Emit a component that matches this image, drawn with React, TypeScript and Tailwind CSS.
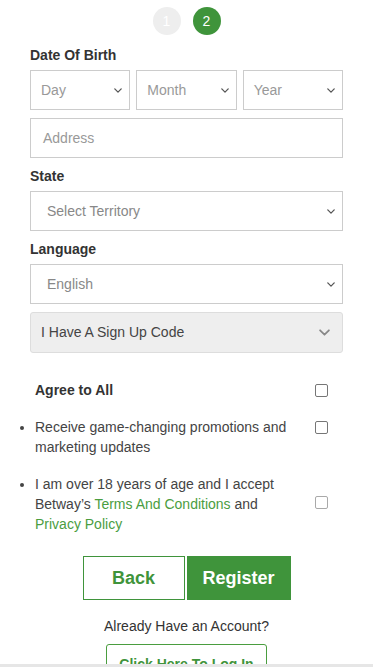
import type { ReactNode } from "react";

function Chevron({ className }: { className?: string }) {
  return (
    <svg
      viewBox="0 0 10 6"
      className={className}
      fill="none"
      stroke="currentColor"
      strokeWidth="1.6"
      strokeLinecap="round"
      strokeLinejoin="round"
    >
      <polyline points="1,1 5,5 9,1" />
    </svg>
  );
}

function SelectBox({ label, padLeft }: { label: string; padLeft: "sm" | "lg" }) {
  return (
    <div className="relative h-10 border border-[#cccccc] bg-white flex items-center">
      <span
        className={
          padLeft === "sm"
            ? "pl-[10px] text-[14px] text-[#999999]"
            : "pl-[16px] text-[14px] text-[#888888]"
        }
      >
        {label}
      </span>
      <Chevron className="absolute right-[7px] top-[17px] w-[8px] h-[5px] text-[#555555]" />
    </div>
  );
}

function Label({ children }: { children: ReactNode }) {
  return (
    <div className="text-[14px] leading-5 font-bold text-[#333333] mb-[5px]">
      {children}
    </div>
  );
}

function Checkbox({ light }: { light?: boolean }) {
  return (
    <span
      className={
        light
          ? "block w-[13px] h-[13px] rounded-[2px] border border-[#a9a9a9] bg-white"
          : "block w-[13px] h-[13px] rounded-[2px] border border-[#767676] bg-white"
      }
    />
  );
}

export default function App() {
  return (
    <div className="min-h-screen bg-white font-['Liberation_Sans',Arial,sans-serif] text-[#333333]">
      <div className="flex justify-center gap-3 pt-[7px]">
        <div className="w-7 h-7 rounded-full bg-[#eeeeee] text-white text-[14px] flex items-center justify-center">
          1
        </div>
        <div className="w-7 h-7 rounded-full bg-[#3f943b] text-white text-[14px] flex items-center justify-center">
          2
        </div>
      </div>

      <div className="px-[30px] pt-[10px]">
        <Label>Date Of Birth</Label>
        <div className="grid grid-cols-3 gap-[6px]">
          <SelectBox label="Day" padLeft="sm" />
          <SelectBox label="Month" padLeft="sm" />
          <SelectBox label="Year" padLeft="sm" />
        </div>

        <div className="mt-2 h-10 border border-[#cccccc] flex items-center pl-[12px] text-[14px] text-[#999999]">
          Address
        </div>

        <div className="mt-2">
          <Label>State</Label>
          <SelectBox label="Select Territory" padLeft="lg" />
        </div>

        <div className="mt-2">
          <Label>Language</Label>
          <SelectBox label="English" padLeft="lg" />
        </div>

        <div className="mt-2 h-[41px] rounded-[3px] border border-[#dddddd] bg-[#eeeeee] flex items-center justify-between pl-[10px] pr-[12px]">
          <span className="text-[14px] text-[#444444]">I Have A Sign Up Code</span>
          <Chevron className="w-[11px] h-[7px] text-[#888888]" />
        </div>
      </div>

      <div className="mt-[27px] pl-[35px] pr-[45px] text-[14px] leading-5 text-[#444444]">
        <div className="flex items-center justify-between">
          <span className="font-bold text-[#333333]">Agree to All</span>
          <Checkbox />
        </div>
        <ul className="list-disc mt-[17px] flex flex-col gap-[17px]">
          <li>
            <div className="flex items-start justify-between">
              <span className="w-[260px]">
                Receive game-changing promotions and marketing updates
              </span>
              <span className="pt-[4px]">
                <Checkbox />
              </span>
            </div>
          </li>
          <li>
            <div className="flex items-center justify-between">
              <p className="w-[260px]">
                I am over 18 years of age and I accept Betway’s{" "}
                <a className="text-[#4a9d3f]">Terms And Conditions</a> and{" "}
                <a className="text-[#4a9d3f]">Privacy Policy</a>
              </p>
              <span className="pb-[4px]">
                <Checkbox light />
              </span>
            </div>
          </li>
        </ul>
      </div>

      <div className="mt-[22px] flex justify-center gap-[2px]">
        <button className="w-[102px] h-[44px] border border-[#3f943b] bg-white text-[#3f943b] text-[18px] font-bold">
          Back
        </button>
        <button className="w-[104px] h-[44px] bg-[#3f943b] text-white text-[18px] font-bold">
          Register
        </button>
      </div>

      <div className="mt-[16px] text-center text-[14px] leading-5 text-[#333333]">
        Already Have an Account?
      </div>

      <div className="mt-[8px] flex justify-center pb-4">
        <button className="w-[161px] h-[40px] rounded-[3px] border border-[#4a9d3f] bg-white text-[#3f943b] text-[14px] font-bold">
          Click Here To Log In
        </button>
      </div>

      <div className="fixed bottom-0 left-0 right-0 h-[3px] bg-[#e6e6e6]" />
    </div>
  );
}
